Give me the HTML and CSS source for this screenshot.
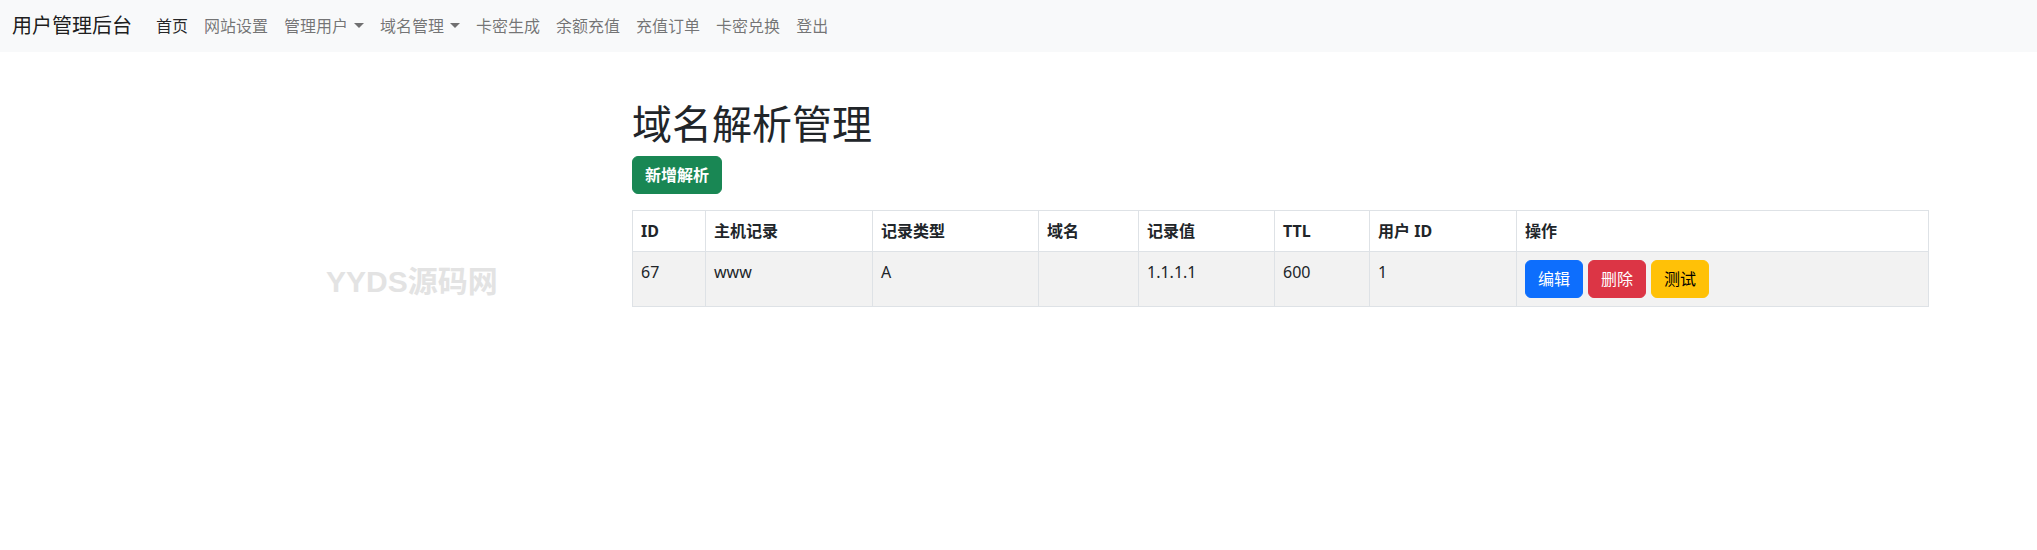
FILE: index.html
```html
<!DOCTYPE html>
<html lang="zh-CN">

<head>
    <meta charset="UTF-8">
    <meta name="viewport" content="width=device-width, initial-scale=1.0">
    <title>域名解析管理</title>
    <link rel="stylesheet" href="styles.css">
</head>

<body>
    <!-- 顶部导航 -->
    <nav class="navbar">
        <a class="brand" href="#">用户管理后台</a>
        <ul class="nav">
            <li><a class="nav-link active" href="#">首页</a></li>
            <li><a class="nav-link" href="#">网站设置</a></li>
            <li><a class="nav-link dropdown" href="#">管理用户</a></li>
            <li><a class="nav-link dropdown" href="#">域名管理</a></li>
            <li><a class="nav-link" href="#">卡密生成</a></li>
            <li><a class="nav-link" href="#">余额充值</a></li>
            <li><a class="nav-link" href="#">充值订单</a></li>
            <li><a class="nav-link" href="#">卡密兑换</a></li>
            <li><a class="nav-link" href="#">登出</a></li>
        </ul>
    </nav>

    <!-- 主体内容 -->
    <div class="main">
        <h1>域名解析管理</h1>
        <div class="toolbar">
            <a class="btn btn-success" href="#">新增解析</a>
        </div>

        <table class="records">
            <colgroup>
                <col class="col-id">
                <col class="col-host">
                <col class="col-type">
                <col class="col-domain">
                <col class="col-value">
                <col class="col-ttl">
                <col class="col-user">
                <col class="col-actions">
            </colgroup>
            <thead>
                <tr>
                    <th>ID</th>
                    <th>主机记录</th>
                    <th>记录类型</th>
                    <th>域名</th>
                    <th>记录值</th>
                    <th>TTL</th>
                    <th>用户 ID</th>
                    <th>操作</th>
                </tr>
            </thead>
            <tbody>
                <tr>
                    <td>67</td>
                    <td>www</td>
                    <td>A</td>
                    <td></td>
                    <td>1.1.1.1</td>
                    <td>600</td>
                    <td>1</td>
                    <td>
                        <div class="actions">
                            <a class="btn btn-primary" href="#">编辑</a>
                            <a class="btn btn-danger" href="#">删除</a>
                            <a class="btn btn-warning" href="#">测试</a>
                        </div>
                    </td>
                </tr>
            </tbody>
        </table>
    </div>

    <!-- 水印 -->
    <div class="watermark">YYDS源码网</div>
</body>

</html>
```

FILE: styles.css
```css
body {
    margin: 0;
    font-family: "Noto Sans", "Noto Sans CJK SC", sans-serif;
    font-size: 16px;
    line-height: 24px;
    color: #212529;
    background: #fff;
}

a {
    text-decoration: none;
}

/* 导航栏 */
.navbar {
    display: flex;
    align-items: center;
    height: 52px;
    padding: 0 12px;
    background-color: #f8f9fa;
}

.brand {
    margin-right: 16px;
    font-size: 20px;
    line-height: 30px;
    color: rgba(0, 0, 0, 0.9);
}

.nav {
    display: flex;
    margin: 0;
    padding: 0;
    list-style: none;
}

.nav-link {
    display: block;
    padding: 8px;
    color: rgba(0, 0, 0, 0.55);
}

.nav-link.active {
    color: rgba(0, 0, 0, 0.85);
}

.dropdown::after {
    content: "";
    display: inline-block;
    margin-left: 6px;
    vertical-align: 4px;
    border-top: 5px solid;
    border-left: 5px solid transparent;
    border-right: 5px solid transparent;
}

/* 主体 */
.main {
    width: 1296px;
    margin: 48px 0 0 632px;
}

h1 {
    margin: 0 0 8px;
    font-size: 40px;
    font-weight: 400;
    line-height: 48px;
}

.toolbar {
    display: flex;
    margin-bottom: 16px;
}

/* 按钮 */
.btn {
    display: inline-block;
    padding: 6px 12px;
    border: 1px solid transparent;
    border-radius: 6px;
    font-size: 16px;
    line-height: 24px;
    color: #fff;
}

.btn-success {
    background-color: #198754;
    border-color: #198754;
    font-weight: 700;
}

.btn-primary {
    background-color: #0d6efd;
    border-color: #0d6efd;
}

.btn-danger {
    background-color: #dc3545;
    border-color: #dc3545;
}

.btn-warning {
    background-color: #ffc107;
    border-color: #ffc107;
    color: #000;
}

/* 表格 */
.records {
    width: 1296px;
    table-layout: fixed;
    border-collapse: collapse;
}

.records th,
.records td {
    padding: 8px;
    border: 1px solid #dee2e6;
    text-align: left;
    vertical-align: top;
}

.records th {
    font-weight: 700;
}

.records tbody tr {
    background-color: #f2f2f2;
}

.col-id { width: 73px; }
.col-host { width: 167px; }
.col-type { width: 166px; }
.col-domain { width: 100px; }
.col-value { width: 136px; }
.col-ttl { width: 95px; }
.col-user { width: 147px; }
.col-actions { width: 412px; }

.actions {
    display: flex;
    gap: 5px;
}

/* 水印 */
.watermark {
    position: absolute;
    left: 326px;
    top: 264px;
    font-family: "Liberation Sans", "Noto Sans CJK SC", sans-serif;
    font-size: 30px;
    font-weight: 700;
    line-height: 36px;
    color: #e3e3e3;
}
```
